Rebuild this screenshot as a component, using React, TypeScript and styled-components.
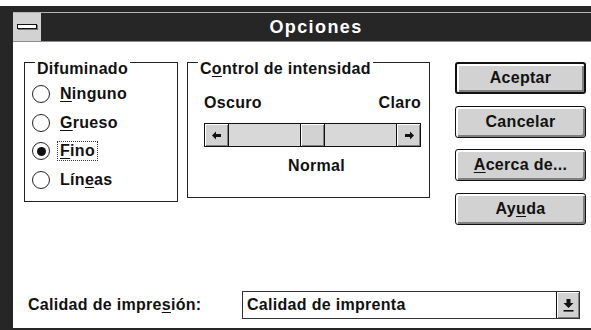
import styled, { createGlobalStyle } from 'styled-components';

const GlobalStyle = createGlobalStyle`
  html, body {
    margin: 0;
    padding: 0;
    background: #fff;
    overflow: hidden;
  }
  body {
    font-family: 'Liberation Sans', Arial, sans-serif;
    color: #111;
  }
`;

const FACE = '#d2d2d2';
const SHADOW = '#808080';

const Window = styled.div`
  margin-top: 6px;
  width: 591px;
  height: 324px;
  box-sizing: border-box;
  border-left: 13px solid #262626;
  border-top: 6px solid #262626;
  border-bottom: 2px solid #262626;
  display: flex;
  flex-direction: column;
`;

const TitleBar = styled.div`
  height: 30px;
  box-sizing: border-box;
  border-top: 1px solid #b4b4b4;
  border-bottom: 1px solid #8a8a8a;
  background: #262626;
  display: flex;
`;

const MenuBox = styled.div`
  width: 28px;
  height: 28px;
  background: ${FACE};
  display: flex;
  align-items: center;
  justify-content: center;
`;

const MenuBar = styled.span`
  display: block;
  width: 18px;
  height: 3px;
  margin-top: -2px;
  background: #fff;
  border: 1px solid #111;
  box-shadow: 1px 1px 0 #777;
`;

const Title = styled.div`
  flex: 1;
  text-align: center;
  color: #fff;
  font-weight: bold;
  font-size: 18px;
  letter-spacing: 1.4px;
  line-height: 28px;
`;

const Content = styled.div`
  flex: 1;
  background: #fff;
  display: flex;
  flex-direction: column;
  font-size: 16px;
  font-weight: bold;
  letter-spacing: 0.3px;
`;

const TopSection = styled.div`
  display: flex;
  align-items: flex-start;
  padding: 20px 0 0 11px;
`;

const GroupBox = styled.div<{ $w: number; $h: number; $ml?: number }>`
  position: relative;
  width: ${(p) => p.$w}px;
  height: ${(p) => p.$h}px;
  margin-left: ${(p) => p.$ml ?? 0}px;
  box-sizing: border-box;
  border: 1px solid #222;
`;

const Caption = styled.span`
  position: absolute;
  top: -3px;
  left: 10px;
  padding: 0 2px;
  background: #fff;
  line-height: 18px;
`;

const Key = styled.span`
  text-decoration: underline;
  text-underline-offset: 2px;
`;

const RadioList = styled.div`
  display: flex;
  flex-direction: column;
  padding: 17px 0 0 7px;
`;

const RadioRow = styled.div`
  display: flex;
  align-items: center;
  height: 28.5px;
  gap: 10px;
`;

const Circle = styled.span<{ $on?: boolean }>`
  width: 18px;
  height: 18px;
  box-sizing: border-box;
  border: 1px solid #222;
  border-radius: 50%;
  background: #fff;
  display: flex;
  align-items: center;
  justify-content: center;
  &::after {
    content: '';
    display: ${(p) => (p.$on ? 'block' : 'none')};
    width: 9px;
    height: 9px;
    border-radius: 50%;
    background: #111;
  }
`;

const RadioLabel = styled.span<{ $focus?: boolean }>`
  line-height: 18px;
  ${(p) =>
    p.$focus
      ? `border: 1px dotted #333; padding: 0 2px; margin-left: -3px;`
      : ''}
`;

const IntensityInner = styled.div`
  padding: 31px 8px 0 16px;
  display: flex;
  flex-direction: column;
`;

const EndLabels = styled.div`
  display: flex;
  justify-content: space-between;
  line-height: 18px;
`;

const ScrollBar = styled.div`
  margin-top: 11px;
  height: 24px;
  box-sizing: border-box;
  border: 1px solid #111;
  background: #d8d8d8;
  display: flex;
`;

const ArrowBtn = styled.div<{ $side: 'left' | 'right' }>`
  width: 23px;
  background: ${FACE};
  box-shadow: inset 1px 1px 0 #fff, inset -1px -1px 0 ${SHADOW};
  ${(p) => (p.$side === 'left' ? 'border-right' : 'border-left')}: 1px solid #111;
  display: flex;
  align-items: center;
  justify-content: center;
`;

const Track = styled.div`
  flex: 1;
  display: flex;
  justify-content: center;
`;

const Thumb = styled.div`
  width: 23px;
  background: ${FACE};
  border-left: 1px solid #111;
  border-right: 1px solid #111;
  box-shadow: inset 1px 1px 0 #fff, inset -1px -1px 0 ${SHADOW};
`;

const Level = styled.div`
  margin-top: 10px;
  text-align: center;
  line-height: 18px;
  padding-left: 8px;
`;

const ButtonColumn = styled.div`
  margin-left: 25px;
  display: flex;
  flex-direction: column;
  gap: 11.5px;
`;

const PushButton = styled.div<{ $default?: boolean }>`
  width: 131px;
  height: 32px;
  box-sizing: border-box;
  border: ${(p) => (p.$default ? 2 : 1)}px solid #111;
  border-radius: 3px;
  background: ${FACE};
  box-shadow: inset 2px 2px 0 #fff, inset -2px -2px 0 ${SHADOW};
  display: flex;
  align-items: center;
  justify-content: center;
`;

const BottomRow = styled.div`
  margin-top: auto;
  display: flex;
  align-items: center;
  padding: 0 0 9px 15px;
`;

const FieldLabel = styled.span`
  width: 214px;
`;

const Combo = styled.div`
  width: 338px;
  height: 28px;
  box-sizing: border-box;
  border: 1px solid #333;
  background: #fff;
  display: flex;
`;

const ComboText = styled.span`
  flex: 1;
  padding-left: 4px;
  line-height: 26px;
`;

const DropBtn = styled.div`
  width: 22px;
  border-left: 1px solid #111;
  background: ${FACE};
  box-shadow: inset 1px 1px 0 #fff, inset -1px -1px 0 ${SHADOW};
  display: flex;
  align-items: center;
  justify-content: center;
`;

function LeftArrow() {
  return (
    <svg width="10" height="9" viewBox="0 0 10 9">
      <polygon points="0,4.5 4,0.5 4,3 9,3 9,6 4,6 4,8.5" fill="#111" />
    </svg>
  );
}

function RightArrow() {
  return (
    <svg width="10" height="9" viewBox="0 0 10 9">
      <polygon points="10,4.5 6,0.5 6,3 1,3 1,6 6,6 6,8.5" fill="#111" />
    </svg>
  );
}

function DropArrow() {
  return (
    <svg width="11" height="13" viewBox="0 0 11 13">
      <polygon points="3.5,0 7.5,0 7.5,4 10.5,4 5.5,9 0.5,4 3.5,4" fill="#111" />
      <rect x="0.5" y="11" width="10" height="1.6" fill="#111" />
    </svg>
  );
}

const dithering = [
  { pre: '', key: 'N', post: 'inguno' },
  { pre: '', key: 'G', post: 'rueso' },
  { pre: '', key: 'F', post: 'ino', on: true },
  { pre: 'Lín', key: 'e', post: 'as' },
];

export default function App() {
  return (
    <>
      <GlobalStyle />
      <Window>
        <TitleBar>
          <MenuBox>
            <MenuBar />
          </MenuBox>
          <Title>Opciones</Title>
        </TitleBar>
        <Content>
          <TopSection>
            <GroupBox $w={154} $h={140}>
              <Caption>Difuminado</Caption>
              <RadioList>
                {dithering.map((d) => (
                  <RadioRow key={d.key}>
                    <Circle $on={d.on} />
                    <RadioLabel $focus={d.on}>
                      {d.pre}
                      <Key>{d.key}</Key>
                      {d.post}
                    </RadioLabel>
                  </RadioRow>
                ))}
              </RadioList>
            </GroupBox>

            <GroupBox $w={243} $h={136} $ml={9}>
              <Caption>
                C<Key>o</Key>ntrol de intensidad
              </Caption>
              <IntensityInner>
                <EndLabels>
                  <span>Oscuro</span>
                  <span>Claro</span>
                </EndLabels>
                <ScrollBar>
                  <ArrowBtn $side="left">
                    <LeftArrow />
                  </ArrowBtn>
                  <Track>
                    <Thumb />
                  </Track>
                  <ArrowBtn $side="right">
                    <RightArrow />
                  </ArrowBtn>
                </ScrollBar>
                <Level>Normal</Level>
              </IntensityInner>
            </GroupBox>

            <ButtonColumn>
              <PushButton $default>Aceptar</PushButton>
              <PushButton>Cancelar</PushButton>
              <PushButton>
                <Key>A</Key>cerca de...
              </PushButton>
              <PushButton>
                Ay<Key>u</Key>da
              </PushButton>
            </ButtonColumn>
          </TopSection>

          <BottomRow>
            <FieldLabel>
              Calidad de impre<Key>s</Key>ión:
            </FieldLabel>
            <Combo>
              <ComboText>Calidad de imprenta</ComboText>
              <DropBtn>
                <DropArrow />
              </DropBtn>
            </Combo>
          </BottomRow>
        </Content>
      </Window>
    </>
  );
}
